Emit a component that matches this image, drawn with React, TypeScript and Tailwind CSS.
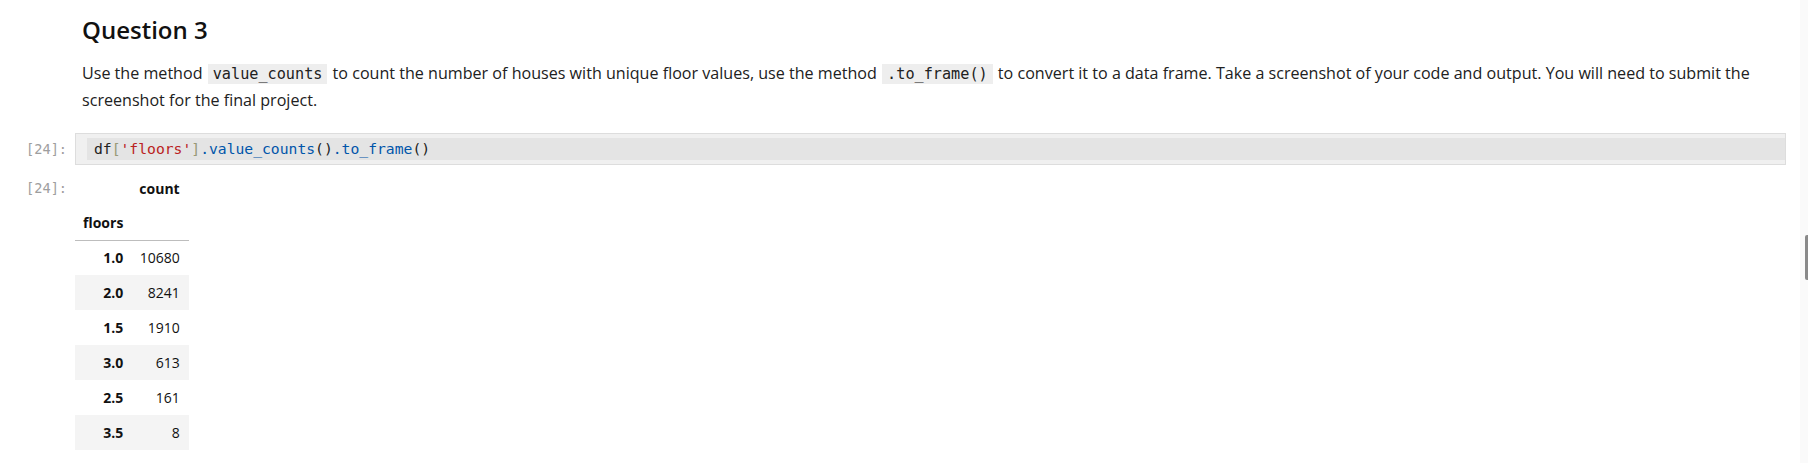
import React from 'react';

const rows: [string, string][] = [
    ['1.0', '10680'],
    ['2.0', '8241'],
    ['1.5', '1910'],
    ['3.0', '613'],
    ['2.5', '161'],
    ['3.5', '8'],
];

const sans = "font-['Open_Sans','Noto_Sans',sans-serif]";
const mono = "font-['DejaVu_Sans_Mono','Liberation_Mono',monospace]";

const InlineCode = ({ children }: { children: React.ReactNode }) => (
    <code className={`inline-block align-baseline ${mono} text-[15.2px] leading-[20px] bg-[#eeeeee] px-[5px] mx-[1px] text-[#212121]`}>
        {children}
    </code>
);

const App = () => {
    return (
        <div className={`flex w-full h-[463px] bg-white overflow-hidden ${sans}`}>
            <div className="flex-1 flex flex-col">
                {/* markdown cell */}
                <div className="pl-[82px] pr-[40px] pt-[14px]">
                    <h2 className="text-[24px] leading-[32px] font-semibold text-[#111111]">Question 3</h2>
                    <p className="mt-[14px] text-[16.1px] leading-[27px] text-[#212121]">
                        <span>Use the method </span>
                        <InlineCode>value_counts</InlineCode>
                        <span> to count the number of houses with unique floor values, use the method </span>
                        <InlineCode>.to_frame()</InlineCode>
                        <span> to convert it to a data frame. Take a screenshot of your code and output. You will need to submit the</span>
                        <br />
                        <span>screenshot for the final project.</span>
                    </p>
                </div>

                {/* code cell */}
                <div className="flex mt-[19px] pr-[14px]">
                    <div className={`w-[75px] shrink-0 pr-[8px] text-right ${mono} text-[13.6px] leading-[32px] text-[#9e9e9e]`}>
                        [24]:
                    </div>
                    <div className="flex-1 h-[32px] border border-[#dddddd] bg-[#f0f0f0] flex py-[4px]">
                        <div className="w-[11px] shrink-0" />
                        <div className={`flex-1 bg-[#e4e4e4] pl-[7px] ${mono} text-[14.7px] leading-[22px]`}>
                            <span className="text-[#212121]">df</span>
                            <span className="text-[#999977]">[</span>
                            <span className="text-[#ba2121]">'floors'</span>
                            <span className="text-[#999977]">]</span>
                            <span className="text-[#0055aa]">.value_counts</span>
                            <span className="text-[#212121]">()</span>
                            <span className="text-[#0055aa]">.to_frame</span>
                            <span className="text-[#212121]">()</span>
                        </div>
                    </div>
                </div>

                {/* output */}
                <div className="flex mt-[6px]">
                    <div className={`w-[75px] shrink-0 pr-[8px] text-right ${mono} text-[13.6px] leading-[34px] text-[#9e9e9e]`}>
                        [24]:
                    </div>
                    <table className="border-collapse text-[14px] text-[#111111]">
                        <thead>
                            <tr className="h-[34px]">
                                <th className="px-[8px]"></th>
                                <th className="pl-[8px] pr-[9px] text-right font-bold">count</th>
                            </tr>
                            <tr className="h-[35px] border-b border-[#bdbdbd]">
                                <th className="px-[8px] text-left font-bold">floors</th>
                                <th className="px-[8px]"></th>
                            </tr>
                        </thead>
                        <tbody>
                            {rows.map(([floor, count], i) => (
                                <tr key={floor} className={`h-[35px] ${i % 2 === 1 ? 'bg-[#f4f4f4]' : ''}`}>
                                    <th className="px-[8px] text-right font-bold">{floor}</th>
                                    <td className="pl-[8px] pr-[9px] text-right">{count}</td>
                                </tr>
                            ))}
                        </tbody>
                    </table>
                </div>
            </div>

            {/* scrollbar */}
            <div className="w-[8px] shrink-0 bg-[#fafafa] flex justify-end">
                <div className="mt-[235px] w-[3px] h-[45px] rounded-l-[2px] bg-[#8a8a8a]" />
            </div>
        </div>
    );
};

export default App;
